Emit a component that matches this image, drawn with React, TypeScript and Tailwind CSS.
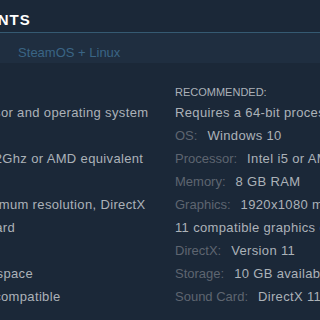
import React from "react";

type Row = { label?: string; value: string };

const minRows: Row[] = [
  { value: "Requires a 64-bit processor and operating system" },
  { label: "OS:", value: "Windows 10" },
  { label: "Processor:", value: "Intel Core i3 2Ghz or AMD equivalent" },
  { label: "Memory:", value: "4 GB RAM" },
  { label: "Graphics:", value: "1280x720 minimum resolution, DirectX 11 compatible graphics card" },
  { label: "DirectX:", value: "Version 11" },
  { label: "Storage:", value: "5 GB available space" },
  { label: "Sound Card:", value: "DirectX 11 compatible" },
];

const recRows: Row[] = [
  { value: "Requires a 64-bit processor and operating system" },
  { label: "OS:", value: "Windows 10" },
  { label: "Processor:", value: "Intel i5 or AMD equivalent" },
  { label: "Memory:", value: "8 GB RAM" },
  { label: "Graphics:", value: "1920x1080 minimum resolution, DirectX 11 compatible graphics card" },
  { label: "DirectX:", value: "Version 11" },
  { label: "Storage:", value: "10 GB available space" },
  { label: "Sound Card:", value: "DirectX 11 compatible" },
];

function Column({ title, rows, width }: { title: string; rows: Row[]; width: string }) {
  return (
    <div className={`${width} shrink-0`}>
      <div className="text-[11px] leading-[14px] uppercase text-[#acb2b8] mb-[2px]">{title}</div>
      <ul className="text-[13px] leading-[23px] text-[#acb2b8] tracking-[0.35px]">
        {rows.map((r, i) => (
          <li key={i}>
            {r.label && <span className="text-[#5e6570] mr-[6px] tracking-normal">{r.label}</span>} {r.value}
          </li>
        ))}
      </ul>
    </div>
  );
}

export default function App() {
  return (
    <div className="w-[320px] h-[320px] overflow-hidden bg-[#1b2838] font-['Liberation_Sans',Arial,sans-serif]">
      <h2 className="ml-[-175px] pt-[10px] pb-[2px] text-[15px] leading-[20px] uppercase tracking-[1px] text-white whitespace-nowrap font-bold">
        System Requirements
      </h2>
      <div className="border-t border-[#355a72] bg-[#1f2e40] h-[31px]">
        <div className="flex ml-[-153px] pt-[12px] text-[13px] leading-[16px] whitespace-nowrap">
          <span className="px-[15px] text-[#67c1f5]">Windows</span>
          <span className="px-[15px] text-[#3a6585]">macOS</span>
          <span className="px-[15px] text-[#3a6585]">SteamOS + Linux</span>
        </div>
      </div>
      <div className="flex ml-[-156px] gap-[23px] mt-[22px]">
        <Column title="Minimum:" rows={minRows} width="w-[308px]" />
        <Column title="Recommended:" rows={recRows} width="w-[314px]" />
      </div>
    </div>
  );
}
